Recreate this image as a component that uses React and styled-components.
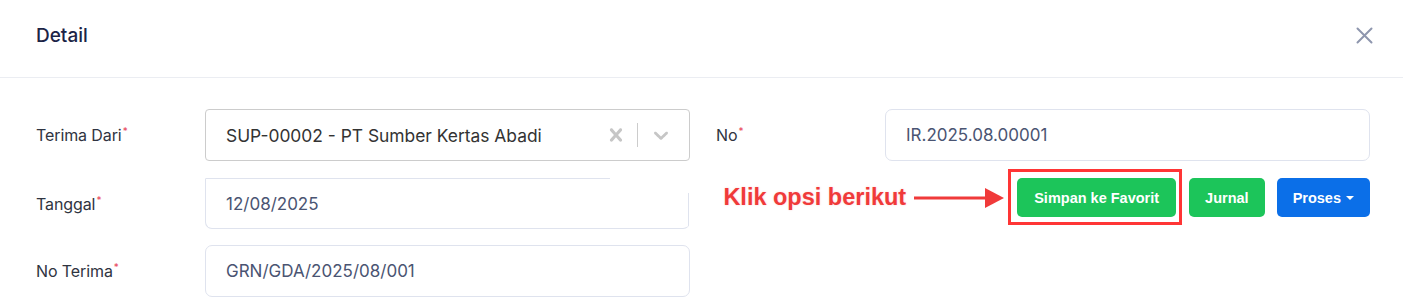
import React from "react";
import styled, { createGlobalStyle } from "styled-components";

const GlobalStyle = createGlobalStyle`
  body {
    margin: 0;
    background: #fff;
    font-family: Inter, "Noto Sans", sans-serif;
  }
`;

const Modal = styled.div`
  width: 1403px;
  height: 307px;
  overflow: hidden;
  background: #fff;
`;

const Header = styled.div`
  display: flex;
  align-items: center;
  justify-content: space-between;
  height: 78px;
  padding: 0 30px 7px 36px;
  box-sizing: border-box;
  border-bottom: 1px solid #ebedf2;
`;

const Title = styled.h5`
  margin: 0;
  font-size: 19px;
  font-weight: 500;
  color: #1b2446;
`;

const CloseButton = styled.button`
  display: flex;
  border: none;
  background: none;
  padding: 0;
  cursor: pointer;
`;

const Body = styled.div`
  display: grid;
  grid-template-columns: 654px 654px;
  column-gap: 26px;
  padding: 31px 0 0 36px;
`;

const Column = styled.div`
  display: flex;
  flex-direction: column;
  gap: 16px;
`;

const Row = styled.div`
  display: flex;
  align-items: center;
  margin-top: ${(p) => p.$mt || 0}px;
`;

const Label = styled.label`
  width: 169px;
  flex-shrink: 0;
  font-size: 16px;
  color: #2f3441;
  letter-spacing: -0.1px;
`;

const Req = styled.sup`
  color: #e8435a;
  font-size: 10px;
  margin-left: 1px;
  vertical-align: 6px;
`;

const Input = styled.div`
  display: flex;
  align-items: center;
  width: 485px;
  height: ${(p) => p.$h || 52}px;
  box-sizing: border-box;
  padding: 0 20px;
  border: 1px solid #dfe3ee;
  border-radius: 7px;
  font-size: 17px;
  color: #4a5472;
`;

const DateInput = styled(Input)`
  border-top-color: transparent;
  border-right-color: transparent;
  background:
    linear-gradient(#dfe3ee, #dfe3ee) no-repeat 0 -1px / 404px 1px,
    linear-gradient(#dfe3ee, #dfe3ee) no-repeat right 14px / 1px 37px;
  border-top-left-radius: 0;
  border-top-right-radius: 0;
`;

const Select = styled.div`
  display: flex;
  align-items: center;
  width: 485px;
  height: 52px;
  box-sizing: border-box;
  border: 1px solid #cccccc;
  border-radius: 4px;
  padding-left: 20px;
  font-size: 17.4px;
  color: #333;
`;

const SelectValue = styled.div`
  flex: 1;
  white-space: nowrap;
`;

const Indicators = styled.div`
  display: flex;
  align-items: center;
  padding-right: 16px;
  color: #c6c6c6;
`;

const Indicator = styled.span`
  display: flex;
  margin: ${(p) => p.$m || 0};
`;

const Separator = styled.span`
  width: 1px;
  height: 24px;
  background: #cccccc;
`;

const Actions = styled.div`
  display: flex;
  align-items: center;
  justify-content: flex-end;
  width: 654px;
  height: 39px;
  margin-top: 1px;
  white-space: nowrap;

  & > * {
    flex-shrink: 0;
  }
`;

const Note = styled.span`
  font-family: "Liberation Sans", Arial, sans-serif;
  font-weight: 700;
  font-size: 23.5px;
  color: #f03a3a;
  text-shadow: 0 0 2px rgba(240, 58, 58, 0.25);
`;

const Arrow = styled.svg`
  margin: 0 4px 0 8px;
`;

const Highlight = styled.div`
  display: flex;
  padding: 6px 3px 5px 6px;
  border: 3px solid #ff3535;
  margin: -9px 0 -8px;
`;

const Button = styled.button`
  display: flex;
  align-items: center;
  gap: 5px;
  height: 39px;
  padding: 0 ${(p) => p.$px || 16}px;
  border: none;
  border-radius: 5px;
  background: ${(p) => (p.$blue ? "#0b6fe8" : "#1cc55a")};
  color: #fff;
  font-family: "Liberation Sans", Arial, sans-serif;
  font-weight: 700;
  font-size: 14.5px;
  white-space: nowrap;
  cursor: pointer;
  margin-left: ${(p) => p.$ml || 0}px;
`;

const Caret = styled.span`
  width: 0;
  height: 0;
  border-left: 4px solid transparent;
  border-right: 4px solid transparent;
  border-top: 4px solid #fff;
  margin-top: 1px;
`;

const ClearIcon = () => (
  <svg width="26" height="26" viewBox="0 0 20 20" fill="currentColor">
    <path d="M14.348 14.849c-0.469 0.469-1.229 0.469-1.697 0l-2.651-3.030-2.651 3.029c-0.469 0.469-1.229 0.469-1.697 0-0.469-0.469-0.469-1.229 0-1.697l2.758-3.15-2.759-3.152c-0.469-0.469-0.469-1.228 0-1.697s1.228-0.469 1.697 0l2.652 3.031 2.651-3.031c0.469-0.469 1.228-0.469 1.697 0s0.469 1.229 0 1.697l-2.758 3.152 2.758 3.15c0.469 0.469 0.469 1.229 0 1.698z" />
  </svg>
);

const ChevronIcon = () => (
  <svg width="24" height="24" viewBox="0 0 20 20" fill="currentColor">
    <path d="M4.516 7.548c0.436-0.446 1.043-0.481 1.576 0l3.908 3.747 3.908-3.747c0.533-0.481 1.141-0.446 1.574 0 0.436 0.445 0.408 1.197 0 1.615-0.406 0.418-4.695 4.502-4.695 4.502-0.217 0.223-0.502 0.335-0.787 0.335s-0.57-0.112-0.789-0.335c0 0-4.287-4.084-4.695-4.502s-0.436-1.17 0-1.615z" />
  </svg>
);

const App = () => (
  <Modal>
    <GlobalStyle />
    <Header>
      <Title>Detail</Title>
      <CloseButton>
        <svg width="17" height="17" viewBox="0 0 17 17">
          <path d="M1.5 1.5l14 14M15.5 1.5l-14 14" stroke="#8e96ae" strokeWidth="2" strokeLinecap="round" />
        </svg>
      </CloseButton>
    </Header>
    <Body>
      <Column>
        <Row>
          <Label>
            Terima Dari<Req>*</Req>
          </Label>
          <Select>
            <SelectValue>SUP-00002 - PT Sumber Kertas Abadi</SelectValue>
            <Indicators>
              <Indicator $m="0 8px 0 0">
                <ClearIcon />
              </Indicator>
              <Separator />
              <Indicator $m="0 0 0 11px">
                <ChevronIcon />
              </Indicator>
            </Indicators>
          </Select>
        </Row>
        <Row $mt={1}>
          <Label>
            Tanggal<Req>*</Req>
          </Label>
          <DateInput $h={51}>12/08/2025</DateInput>
        </Row>
        <Row>
          <Label>
            No Terima<Req>*</Req>
          </Label>
          <Input>GRN/GDA/2025/08/001</Input>
        </Row>
      </Column>
      <Column>
        <Row>
          <Label>
            No<Req>*</Req>
          </Label>
          <Input>IR.2025.08.00001</Input>
        </Row>
        <Actions>
          <Note>Klik opsi berikut</Note>
          <Arrow width="90" height="24" viewBox="0 0 90 24">
            <path d="M0 12h74" stroke="#f03a3a" strokeWidth="3" />
            <path d="M71 2l19 10-19 10z" fill="#f03a3a" />
          </Arrow>
          <Highlight>
            <Button $px={17}>Simpan ke Favorit</Button>
          </Highlight>
          <Button $ml={7} $px={16}>Jurnal</Button>
          <Button $ml={12} $blue $px={16}>
            Proses <Caret />
          </Button>
        </Actions>
      </Column>
    </Body>
  </Modal>
);

export default App;
